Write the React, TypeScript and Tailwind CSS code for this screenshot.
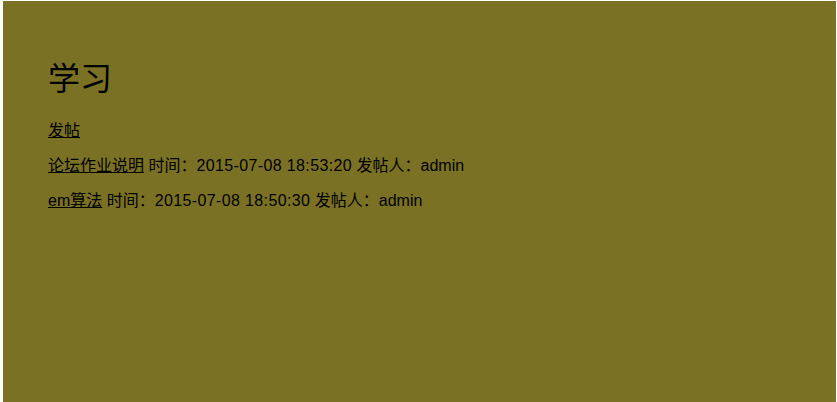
export default function App() {
  const posts = [
    { title: '论坛作业说明', time: '2015-07-08 18:53:20', author: 'admin' },
    { title: 'em算法', time: '2015-07-08 18:50:30', author: 'admin' },
  ];

  return (
    <div className="w-full h-[402px] bg-white pl-[3px] pt-[1px] pr-[1px]">
      <div
        className="h-full bg-[#7b7124] text-black px-[45px] pt-[58px]"
        style={{ fontFamily: '"Liberation Sans", "Noto Sans CJK SC", sans-serif' }}
      >
        {/* Board title */}
        <h1 className="text-[32px] leading-[40px]">学习</h1>

        <p className="mt-[22px] text-[16px] leading-[19px]">
          <a href="#" className="underline">发帖</a>
        </p>

        {posts.map((post) => (
          <p key={post.title} className="mt-[16px] text-[16px] leading-[19px]">
            <a href="#" className="underline">{post.title}</a> 时间：
            <span className="tracking-[0.37px]">{post.time}</span> 发帖人：{post.author}
          </p>
        ))}
      </div>
    </div>
  );
}
